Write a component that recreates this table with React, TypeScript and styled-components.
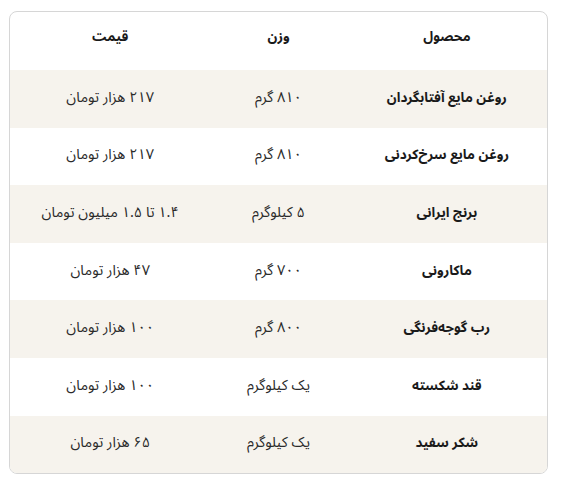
import React from "react";
import styled, { createGlobalStyle } from "styled-components";

const GlobalStyle = createGlobalStyle`
  html, body {
    margin: 0;
    padding: 0;
    background: #ffffff;
  }
  body {
    font-family: "Noto Sans Arabic", "DejaVu Sans", sans-serif;
    color: #222222;
  }
`;

type Item = { name: string; weight: string; price: string };

const items: Item[] = [
  { name: "روغن مایع آفتابگردان", weight: "۸۱۰ گرم", price: "۲۱۷ هزار تومان" },
  { name: "روغن مایع سرخ‌کردنی", weight: "۸۱۰ گرم", price: "۲۱۷ هزار تومان" },
  { name: "برنج ایرانی", weight: "۵ کیلوگرم", price: "۱.۴ تا ۱.۵ میلیون تومان" },
  { name: "ماکارونی", weight: "۷۰۰ گرم", price: "۴۷ هزار تومان" },
  { name: "رب گوجه‌فرنگی", weight: "۸۰۰ گرم", price: "۱۰۰ هزار تومان" },
  { name: "قند شکسته", weight: "یک کیلوگرم", price: "۱۰۰ هزار تومان" },
  { name: "شکر سفید", weight: "یک کیلوگرم", price: "۶۵ هزار تومان" },
];

export default function App() {
  return (
    <>
      <GlobalStyle />
      <Card dir="rtl">
        <HeaderRow>
          <HeadCell>محصول</HeadCell>
          <HeadCell>وزن</HeadCell>
          <HeadCell>قیمت</HeadCell>
        </HeaderRow>
        {items.map((item, i) => (
          <Row key={item.name} $striped={i % 2 === 0}>
            <NameCell>{item.name}</NameCell>
            <Cell>{item.weight}</Cell>
            <Cell>{item.price}</Cell>
          </Row>
        ))}
      </Card>
    </>
  );
}

const Card = styled.div`
  margin: 11px 0 0 9px;
  width: 539px;
  box-sizing: border-box;
  border: 1px solid #d6d6d6;
  border-radius: 8px;
  overflow: hidden;
  background: #ffffff;
`;

const HeaderRow = styled.div`
  display: grid;
  grid-template-columns: repeat(3, 1fr);
  padding: 10px 16px 0;
  height: 58px;
  align-items: start;
  box-sizing: border-box;
`;

const Row = styled.div<{ $striped: boolean }>`
  display: grid;
  grid-template-columns: repeat(3, 1fr);
  padding: 0 16px 3px;
  height: 57.6px;
  box-sizing: border-box;
  align-items: center;
  background: ${(p) => (p.$striped ? "#f6f3ed" : "#ffffff")};
`;

const HeadCell = styled.div`
  text-align: center;
  font-size: 13.5px;
  font-weight: bold;
  color: #1a1a1a;
`;

const Cell = styled.div`
  text-align: center;
  font-size: 14.5px;
  color: #2a2a2a;
`;

const NameCell = styled(Cell)`
  font-size: 13.5px;
  font-weight: bold;
  color: #1a1a1a;
`;
